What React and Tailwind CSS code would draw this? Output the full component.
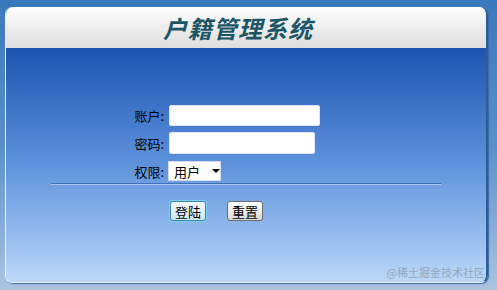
import React from "react";

const cjk = { fontFamily: '"Noto Sans CJK SC", "Liberation Sans", sans-serif' };

const Field = ({ label, children }) => (
  <div className="flex items-center h-[28px]">
    <span className="w-[38px] text-right text-[13px] text-black leading-none pr-[1px] whitespace-nowrap">{label}</span>
    {children}
  </div>
);

export default function App() {
  return (
    <div
      className="w-[497px] h-[290px] bg-gradient-to-b from-[#3a78bd] via-[#5a8fcc] to-[#aac4e0] pt-[7px] pl-[5px] pr-[9px] pb-[7px]"
      style={cjk}
    >
      <div className="h-full flex flex-col rounded-[8px] overflow-hidden border-l border-b border-[#e8f6ff] border-r-2 border-r-[#2a5d9a] shadow-[1px_1px_1px_#3a6aa8]">
        {/* Header */}
        <div className="h-[41px] shrink-0 bg-gradient-to-b from-[#fdfdfd] to-[#dedede] flex items-center justify-center pr-[16px]">
          <h1 className="text-[24px] font-bold italic text-[#1c5566] tracking-[1px] leading-none">
            户籍管理系统
          </h1>
        </div>

        {/* Body */}
        <div className="flex-1 bg-gradient-to-b from-[#1c54b0] via-[#5e93dc] to-[#bcd8f7] flex flex-col">
          <div className="mt-[53px] ml-[121px] flex flex-col">
            <Field label="账户:">
              <div className="w-[151px] h-[21px] bg-white rounded-[2px] border border-[#dfe6f2] ml-[4px]" />
            </Field>
            <Field label="密码:">
              <div className="w-[146px] h-[22px] bg-white rounded-[2px] border border-[#dfe6f2] ml-[4px]" />
            </Field>
            <Field label="权限:">
              <div className="ml-[3px] w-[53px] h-[20px] bg-white border border-[#d6dde8] flex items-center pl-[5px] gap-[12px] whitespace-nowrap">
                <span className="text-[13px] leading-none">用户</span>
                <span className="w-0 h-0 border-l-[4px] border-r-[4px] border-t-[4px] border-l-transparent border-r-transparent border-t-black" />
              </div>
            </Field>
          </div>
          <div className="mx-[45px] -mt-[2px] h-[2px] border-t border-[#3f6fb8] border-b border-b-[#a8c8f0]" />
          <div className="flex ml-[164px] mt-[16px] gap-[21px]">
            <button className="w-[36px] h-[20px] rounded-[3px] border border-[#3a86a8] bg-gradient-to-b from-[#f5fbff] to-[#cfe6f1] text-[13px] leading-none text-black shadow-[0_0_0_1px_#7fd0f0] whitespace-nowrap">
              登陆
            </button>
            <button className="w-[36px] h-[20px] rounded-[3px] border border-[#6f6f6f] bg-gradient-to-b from-[#ffffff] to-[#d9d9d9] text-[13px] leading-none text-black whitespace-nowrap">
              重置
            </button>
          </div>
          <div className="flex-1" />
          <div className="flex justify-end pr-[1px] pb-[4px]">
            <span className="text-[11px] text-[#8a9ab0]/80 leading-none">@稀土掘金技术社区</span>
          </div>
        </div>
      </div>
    </div>
  );
}
